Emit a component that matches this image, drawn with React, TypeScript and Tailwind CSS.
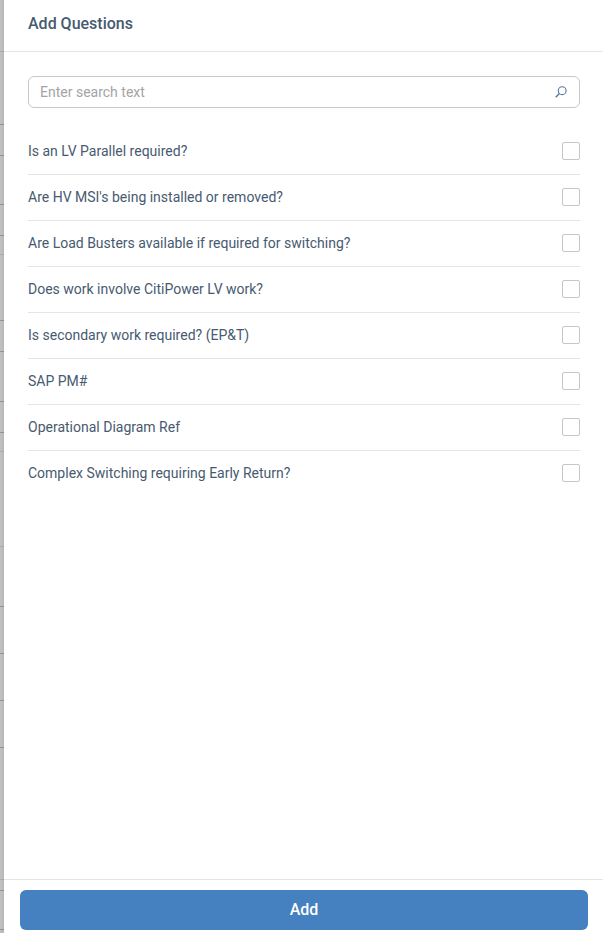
const questions = [
  "Is an LV Parallel required?",
  "Are HV MSI's being installed or removed?",
  "Are Load Busters available if required for switching?",
  "Does work involve CitiPower LV work?",
  "Is secondary work required? (EP&T)",
  "SAP PM#",
  "Operational Diagram Ref",
  "Complex Switching requiring Early Return?",
];

// Rows of the dimmed page that stay visible beside the drawer.
const backdropRows = [
  "h-[52px] border-[#ababab]",
  "h-[73px] border-[#929292]",
  "h-[31px] border-[#929292]",
  "h-[49px] border-[#929292]",
  "h-[31px] border-[#929292]",
  "h-[19px] border-[#a9a9a9]",
  "h-[66px] border-[#929292]",
  "h-[31px] border-[#929292]",
  "h-[50px] border-[#929292]",
  "h-[31px] border-[#929292]",
  "h-[19px] border-[#a9a9a9]",
  "h-[95px] border-[#a9a9a9]",
  "h-[60px] border-[#929292]",
  "h-[47px] border-[#929292]",
  "h-[47px] border-[#929292]",
  "h-[47px] border-[#929292]",
  "h-[132px] border-[#a9a9a9]",
  "h-[11px] border-[#929292]",
  "h-[39px] border-[#929292]",
];

export default function App() {
  return (
    <div className="flex h-[933px] w-[603px] overflow-hidden bg-white font-['Roboto',sans-serif] text-[#475a70]">
      <div className="flex w-1 shrink-0 flex-col bg-linear-to-r from-[#c2c2c2] to-[#b6b6b6]">
        {backdropRows.map((row, i) => (
          <div key={i} className={`shrink-0 border-b ${row}`} />
        ))}
      </div>
      <section className="flex min-w-0 flex-1 flex-col">
        <header className="flex h-[52px] shrink-0 items-center border-b border-[#e4e4e4] px-6 pb-1">
          <h1 className="text-base font-medium">Add Questions</h1>
        </header>
        <main className="flex-1 pt-6 pr-[23px] pl-6">
          <div className="flex h-8 items-center rounded-md border border-[#c8c8c8] pr-3 pl-[11px]">
            <input
              type="text"
              placeholder="Enter search text"
              className="min-w-0 flex-1 text-sm outline-none placeholder:text-[#a4a4a4]"
            />
            <svg width="12" height="12" viewBox="0 0 12 12" fill="none" stroke="#5875a0" className="shrink-0">
              <circle cx="7.2" cy="4.7" r="3.9" strokeWidth="1.1" />
              <path d="M4.4 7.5 0.7 11.2" strokeWidth="1.4" />
            </svg>
          </div>
          <ul className="mt-[21px]">
            {questions.map((text) => (
              <li
                key={text}
                className="flex h-[46px] items-center justify-between border-b border-[#e5e5e5] pb-0.5 text-sm last:border-transparent"
              >
                <span>{text}</span>
                <input
                  type="checkbox"
                  aria-label={text}
                  className="size-[18px] appearance-none rounded-[2px] border border-[#c6c6c6]"
                />
              </li>
            ))}
          </ul>
        </main>
        <footer className="h-[54px] shrink-0 border-t border-[#e4e4e4] pt-[10px] pr-[15px] pl-4">
          <button className="h-10 w-full rounded-md bg-[#4580c0] text-base font-medium text-white">Add</button>
        </footer>
      </section>
    </div>
  );
}
